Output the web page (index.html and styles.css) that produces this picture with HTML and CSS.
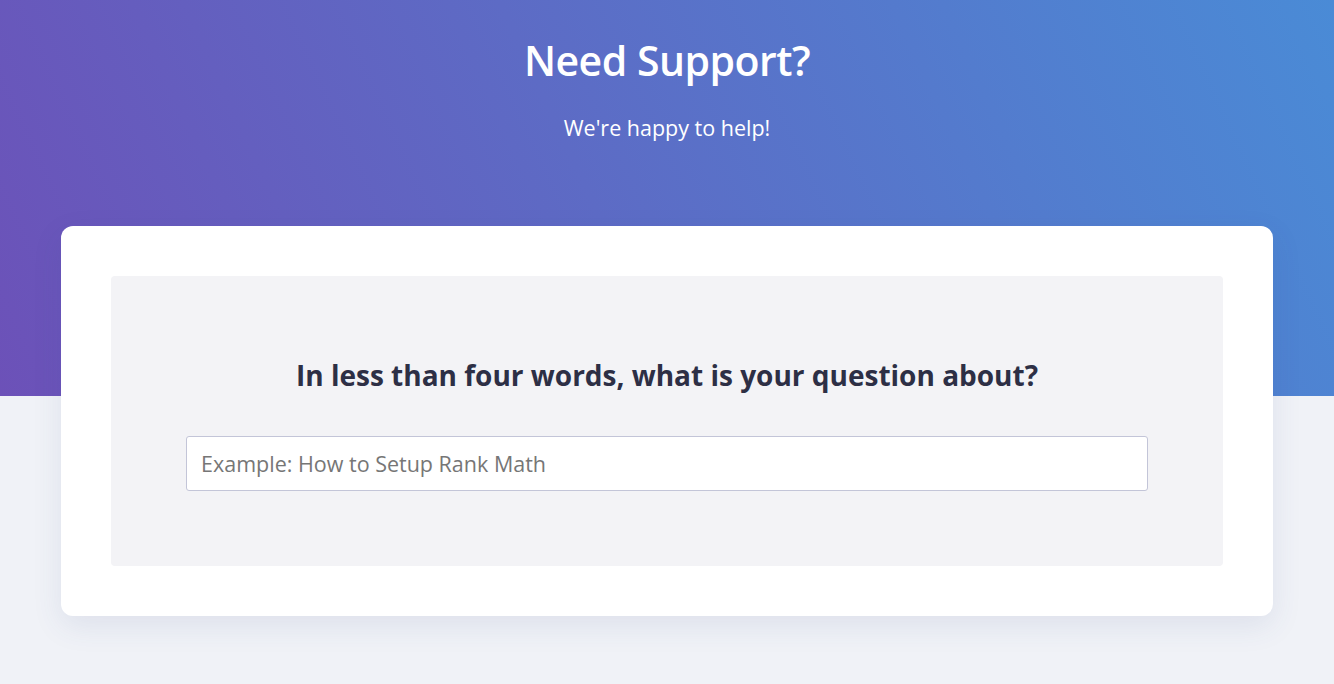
FILE: index.html
```html
<!DOCTYPE html>
<html lang="en">
<head>
<meta charset="utf-8">
<title>Need Support?</title>
<link rel="stylesheet" href="styles.css">
</head>
<body>
<header class="hero">
  <h1 class="hero-title">Need Support?</h1>
  <p class="hero-sub">We're happy to help!</p>
</header>
<main class="card">
  <section class="ask">
    <h2 class="ask-title">In less than four words, what is your question about?</h2>
    <input class="ask-input" type="text" placeholder="Example: How to Setup Rank Math">
  </section>
</main>
</body>
</html>
```
FILE: styles.css
```css
* { box-sizing: border-box; }
html, body { margin: 0; padding: 0; }
body {
  width: 1334px;
  height: 684px;
  overflow: hidden;
  font-family: "Open Sans", "Noto Sans", sans-serif;
  background:
    linear-gradient(65deg, #6c51b8 0%, #5d6bc5 45%, #4a8bd6 100%) top left / 100% 396px no-repeat,
    #f0f2f7;
}
.hero {
  text-align: center;
  color: #fff;
  padding-top: 35px;
}
.hero-title {
  margin: 0;
  font-size: 41px;
  line-height: 50px;
  font-weight: 600;
  letter-spacing: -0.5px;
}
.hero-sub {
  margin: 29px 0 0;
  font-size: 21.5px;
  line-height: 28px;
  font-weight: 400;
}
.card {
  margin: 84px 61px 0;
  background: #fff;
  border-radius: 12px;
  padding: 50px;
  box-shadow: 0 10px 30px rgba(60, 80, 140, 0.10);
}
.ask {
  background: #f3f3f6;
  border-radius: 4px;
  padding: 82px 75px 75px;
  display: flex;
  flex-direction: column;
  align-items: stretch;
}
.ask-title {
  margin: 0 0 44px;
  text-align: center;
  font-size: 28px;
  line-height: 34px;
  font-weight: 700;
  color: #2d2f45;
}
.ask-input {
  height: 55px;
  width: 100%;
  border: 1px solid #c3c5d8;
  border-radius: 3px;
  background: #fff;
  padding: 0 14px;
  font-family: inherit;
  font-size: 21.5px;
  color: #333;
  outline: none;
}
.ask-input::placeholder { color: #767676; }
```
